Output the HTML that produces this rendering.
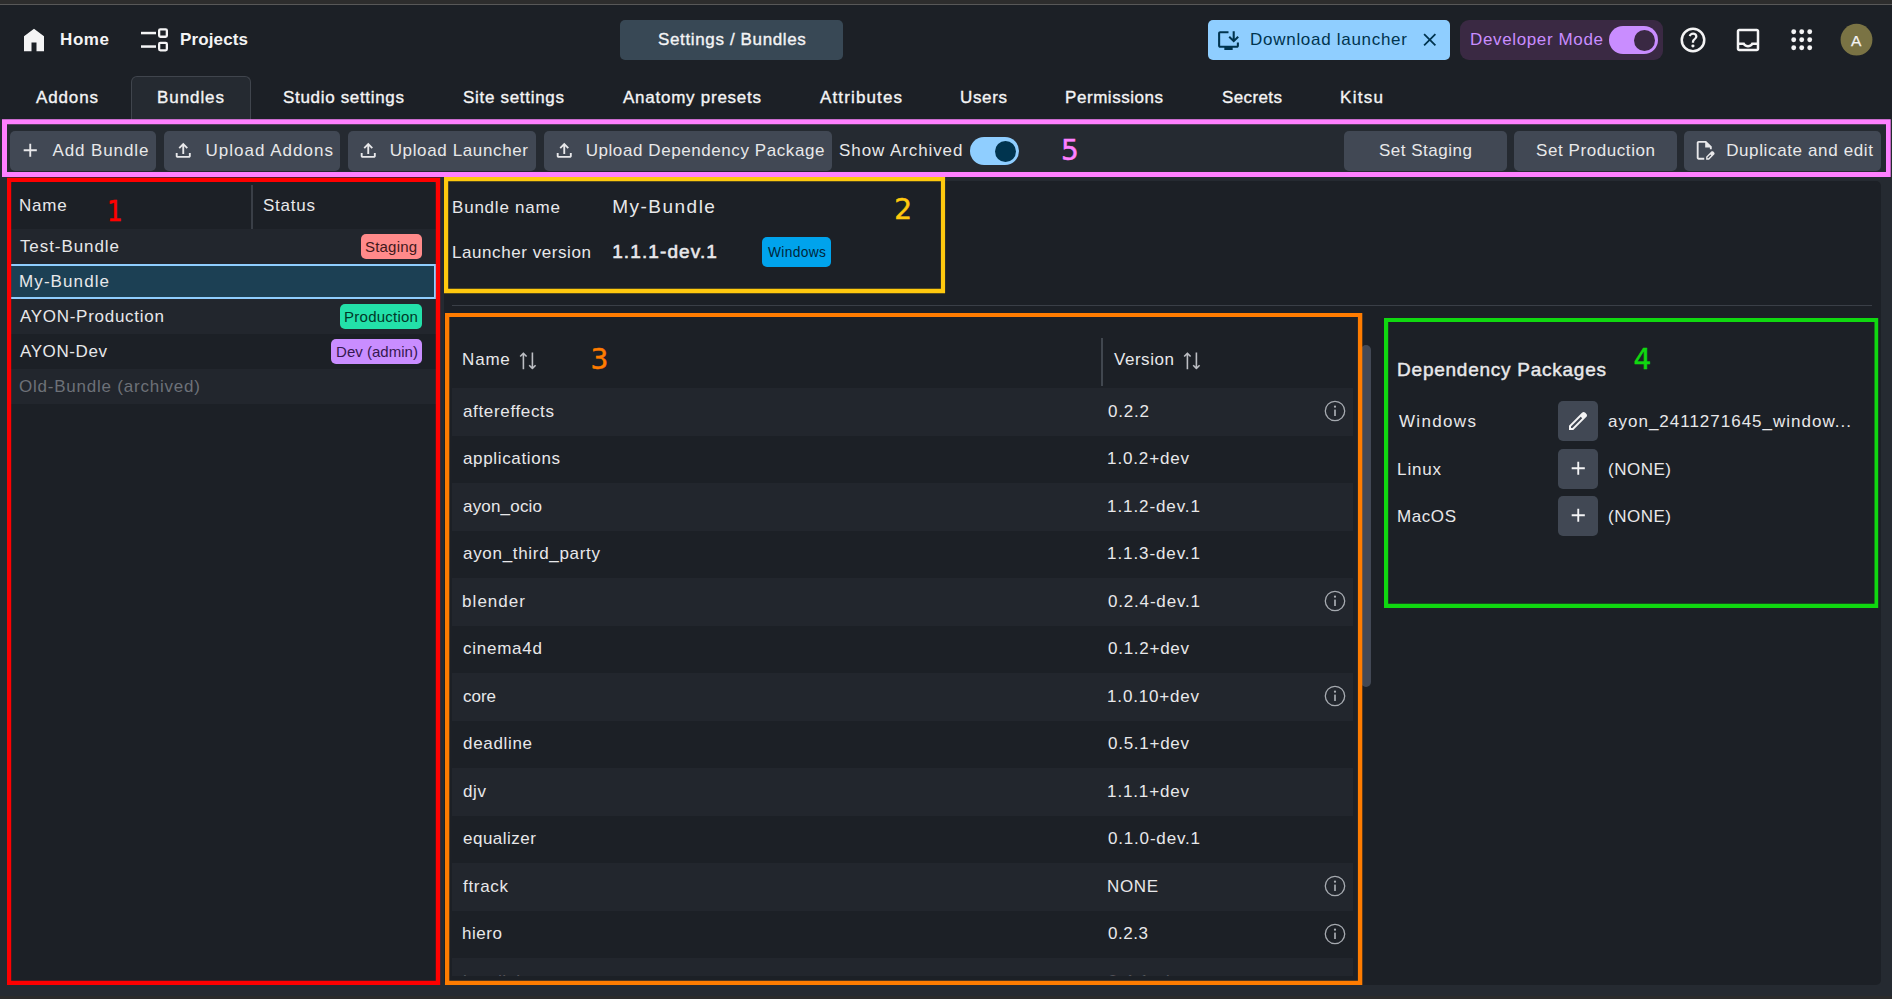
<!DOCTYPE html>
<html lang="en"><head><meta charset="utf-8"><title>AYON - Settings / Bundles</title>
<style>
html,body{margin:0;padding:0;}
body{width:1892px;height:999px;overflow:hidden;background:#1c2026;position:relative;font-family:"Liberation Sans", sans-serif;}
.b{position:absolute;box-sizing:content-box;}
.t{position:absolute;white-space:nowrap;line-height:1;}
svg{position:absolute;overflow:visible;}
</style></head><body>
<div class="b" style="left:0px;top:0px;width:1892px;height:4px;background:#2d2d2d;"></div>
<div class="b" style="left:0px;top:4px;width:1892px;height:1px;background:#585858;"></div>
<div class="b" style="left:0px;top:119px;width:1892px;height:877px;background:#252a31;"></div>
<div class="b" style="left:0px;top:996px;width:1892px;height:3px;background:#2b2b2b;"></div>
<svg style="left:18.7px;top:25px" width="30" height="30" viewBox="0 -960 960 960"><path fill="#f4f4f5" d="M160-120v-480l320-240 320 240v480H560v-280H400v280H160Z"/></svg>
<svg style="left:0;top:0" width="200" height="60"><g fill="#f4f4f5"><rect x="141" y="31.8" width="15" height="2.5"/><rect x="141" y="45.300" width="15" height="2.500"/></g><g fill="none" stroke="#f4f4f5" stroke-width="2.300"><rect x="159.150" y="29.350" width="7.700" height="7.400" rx="1.200"/><rect x="159.150" y="42.900" width="7.700" height="7.400" rx="1.200"/></g></svg>
<div class="b" style="left:620px;top:20px;width:223px;height:40px;background:#384855;border-radius:5px;"></div>
<div class="b" style="left:1208px;top:20px;width:242px;height:40px;background:#8fceff;border-radius:5px;"></div>
<svg style="left:1215.5px;top:27.5px" width="25" height="25" viewBox="0 -960 960 960"><path fill="#00344f" d="M320-120v-80H160q-33 0-56.5-23.5T80-280v-480q0-33 23.5-56.5T160-840h320v80H160v480h640v-120h80v120q0 33-23.5 56.5T800-200H640v80H320Zm360-280L480-600l56-56 104 104v-288h80v288l104-104 56 56-200 200Z"/></svg>
<svg style="left:1419.2px;top:29.2px" width="21.5" height="21.5" viewBox="0 -960 960 960"><path fill="#00344f" d="M256-200l-56-56 224-224-224-224 56-56 224 224 224-224 56 56-224 224 224 224-56 56-224-224-224 224Z"/></svg>
<div class="b" style="left:1460px;top:20px;width:203px;height:40px;background:#3a2943;border-radius:9px;"></div>
<div class="b" style="left:1609px;top:26px;width:49px;height:28px;background:#c98dff;border-radius:14px;"></div>
<div class="b" style="left:1634px;top:29.5px;width:21px;height:21px;background:#3a2943;border-radius:50%;"></div>
<svg style="left:1678px;top:24.7px" width="30" height="30" viewBox="0 -960 960 960"><path fill="#f4f4f5" d="M478-240q21 0 35.5-14.5T528-290q0-21-14.5-35.5T478-340q-21 0-35.5 14.5T428-290q0 21 14.5 35.5T478-240Zm-36-154h74q0-33 7.5-52t42.5-52q26-26 41-49.5t15-56.5q0-56-41-86t-97-30q-57 0-92.5 30T342-618l66 26q5-18 22.5-39t53.5-21q32 0 48 17t16 38.5q0 20-12 37.5T506-526q-44 39-54 59t-10 73Zm38 314q-83 0-156-31.5T197-197q-54-54-85.5-127T80-480q0-83 31.5-156T197-763q54-54 127-85.5T480-880q83 0 156 31.5T763-763q54 54 85.5 127T880-480q0 83-31.5 156T763-197q-54 54-127 85.5T480-80Zm0-80q134 0 227-93t93-227q0-134-93-227t-227-93q-134 0-227 93t-93 227q0 134 93 227t227 93Z"/></svg>
<svg style="left:1732.5px;top:25px" width="30" height="30" viewBox="0 -960 960 960"><path fill="#f4f4f5" d="M200-120q-33 0-56.5-23.5T120-200v-560q0-33 23.5-56.5T200-840h560q33 0 56.5 23.5T840-760v560q0 33-23.5 56.5T760-120H200Zm0-80h560v-120H640q-30 38-71.5 59T480-240q-47 0-88.5-21T320-320H200v120Zm280-120q38 0 69-22t43-58h168v-360H200v360h168q12 36 43 58t69 22Z"/></svg>
<svg style="left:0;top:0" width="1892" height="70"><g fill="#f4f4f5"><circle cx="1793.7" cy="31.7" r="2.450"/><circle cx="1793.7" cy="39.7" r="2.450"/><circle cx="1793.7" cy="47.7" r="2.450"/><circle cx="1801.7" cy="31.7" r="2.450"/><circle cx="1801.7" cy="39.7" r="2.450"/><circle cx="1801.7" cy="47.7" r="2.450"/><circle cx="1809.7" cy="31.7" r="2.450"/><circle cx="1809.7" cy="39.7" r="2.450"/><circle cx="1809.7" cy="47.7" r="2.450"/></g><circle cx="1856.500" cy="39.700" r="15.900" fill="#7a7344"/></svg>
<div class="b" style="left:131px;top:76px;width:118px;height:44px;background:#252a31;border:1px solid #40454d;border-bottom:none;border-radius:6px 6px 0 0;"></div>
<div class="b" style="left:10px;top:131px;width:146px;height:40px;background:#414854;border-radius:5px;"></div>
<svg style="left:18.75px;top:139.15px" width="22.5" height="22.5" viewBox="0 -960 960 960"><path fill="#e8e8ea" d="M440-440H200v-80h240v-240h80v240h240v80H520v240h-80v-240Z"/></svg>
<div class="b" style="left:163.5px;top:131px;width:176.7px;height:40px;background:#414854;border-radius:5px;"></div>
<svg style="left:172.25px;top:139.15px" width="22.5" height="22.5" viewBox="0 -960 960 960"><path fill="#e8e8ea" d="M440-320v-326L336-542l-56-58 200-200 200 200-56 58-104-104v326h-80ZM240-160q-33 0-56.5-23.5T160-240v-120h80v120h480v-120h80v120q0 33-23.5 56.5T720-160H240Z"/></svg>
<div class="b" style="left:347.8px;top:131px;width:188px;height:40px;background:#414854;border-radius:5px;"></div>
<svg style="left:356.55px;top:139.15px" width="22.5" height="22.5" viewBox="0 -960 960 960"><path fill="#e8e8ea" d="M440-320v-326L336-542l-56-58 200-200 200 200-56 58-104-104v326h-80ZM240-160q-33 0-56.5-23.5T160-240v-120h80v120h480v-120h80v120q0 33-23.5 56.5T720-160H240Z"/></svg>
<div class="b" style="left:543.8px;top:131px;width:288.2px;height:40px;background:#414854;border-radius:5px;"></div>
<svg style="left:552.55px;top:139.15px" width="22.5" height="22.5" viewBox="0 -960 960 960"><path fill="#e8e8ea" d="M440-320v-326L336-542l-56-58 200-200 200 200-56 58-104-104v326h-80ZM240-160q-33 0-56.5-23.5T160-240v-120h80v120h480v-120h80v120q0 33-23.5 56.5T720-160H240Z"/></svg>
<div class="b" style="left:970px;top:137px;width:49px;height:28px;background:#8fceff;border-radius:14px;"></div>
<div class="b" style="left:994.5px;top:140.5px;width:21px;height:21px;background:#00344f;border-radius:50%;"></div>
<div class="b" style="left:1344px;top:131px;width:162.8px;height:40px;background:#414854;border-radius:5px;"></div>
<div class="b" style="left:1514px;top:131px;width:162.7px;height:40px;background:#414854;border-radius:5px;"></div>
<div class="b" style="left:1684px;top:131px;width:197px;height:40px;background:#414854;border-radius:5px;"></div>
<svg style="left:1692.75px;top:139.15px" width="22.5" height="22.5" viewBox="0 -960 960 960"><path fill="#e8e8ea" d="M560-80v-123l221-220q9-9 20-13t22-4q12 0 23 4.5t20 13.5l37 37q8 9 12.5 20t4.5 22q0 11-4 22.5T903-300L683-80H560ZM620-140h38l121-122-18-19-19-18-122 121v38ZM240-80q-33 0-56.5-23.5T160-160v-640q0-33 23.5-56.5T240-880h320l240 240v120h-80v-80H520v-200H240v640h240v80H240Z"/></svg>
<div class="b" style="left:10px;top:181px;width:426px;height:804px;background:#1c2026;border-radius:5px;"></div>
<div class="b" style="left:251px;top:185px;width:2px;height:44px;background:#3a3f47;"></div>
<div class="b" style="left:11px;top:229px;width:425px;height:35px;background:#22262d;"></div>
<div class="b" style="left:9px;top:264px;width:423px;height:31px;background:#1c4054;border:2px solid #8fceff;"></div>
<div class="b" style="left:11px;top:299px;width:425px;height:35px;background:#22262d;"></div>
<div class="b" style="left:11px;top:369px;width:425px;height:35px;background:#22262d;"></div>
<div class="b" style="left:361px;top:234px;width:61.2px;height:25px;background:#ff8a8a;border-radius:5px;"></div>
<div class="b" style="left:340px;top:304px;width:82.2px;height:25px;background:#23e0a9;border-radius:5px;"></div>
<div class="b" style="left:331px;top:339px;width:91.2px;height:25px;background:#c98dff;border-radius:5px;"></div>
<div class="b" style="left:444px;top:181px;width:1437px;height:804px;background:#1c2026;border-radius:5px;"></div>
<div class="b" style="left:762px;top:237px;width:69px;height:30px;background:#00a3ec;border-radius:5px;"></div>
<div class="b" style="left:452px;top:305px;width:1420px;height:1px;background:#3a3f47;"></div>
<div class="b" style="left:1101px;top:338px;width:2px;height:48px;background:#41474f;"></div>
<svg style="left:519px;top:351.8px" width="18" height="18" viewBox="0 0 18 18" fill="none" stroke="#bcbec3" stroke-width="1.6" stroke-linejoin="round"><path d="M4.4 17.2V1.2M1.2 4.500L4.4 1.2l3.200 3.300M13.400 0.400V16.500M10.200 13.200l3.200 3.300 3.200-3.300"/></svg>
<svg style="left:1182.8px;top:351.8px" width="18" height="18" viewBox="0 0 18 18" fill="none" stroke="#bcbec3" stroke-width="1.6" stroke-linejoin="round"><path d="M4.4 17.2V1.2M1.2 4.500L4.4 1.2l3.200 3.300M13.400 0.400V16.500M10.200 13.200l3.200 3.300 3.200-3.300"/></svg>
<div class="b" style="left:452px;top:388px;width:901px;height:47.5px;background:#22262d;"></div>
<svg style="left:1323px;top:399px" width="24" height="24" viewBox="0 0 24 24"><circle cx="12" cy="12" r="9.700" fill="none" stroke="#a6aab0" stroke-width="1.300"/><rect x="11.200" y="10.600" width="1.600" height="6.400" fill="#aeb2b8"/><circle cx="12" cy="7.700" r="1.100" fill="#aeb2b8"/></svg>
<div class="b" style="left:452px;top:483px;width:901px;height:47.5px;background:#22262d;"></div>
<div class="b" style="left:452px;top:578px;width:901px;height:47.5px;background:#22262d;"></div>
<svg style="left:1323px;top:589px" width="24" height="24" viewBox="0 0 24 24"><circle cx="12" cy="12" r="9.700" fill="none" stroke="#a6aab0" stroke-width="1.300"/><rect x="11.200" y="10.600" width="1.600" height="6.400" fill="#aeb2b8"/><circle cx="12" cy="7.700" r="1.100" fill="#aeb2b8"/></svg>
<div class="b" style="left:452px;top:673px;width:901px;height:47.5px;background:#22262d;"></div>
<svg style="left:1323px;top:684px" width="24" height="24" viewBox="0 0 24 24"><circle cx="12" cy="12" r="9.700" fill="none" stroke="#a6aab0" stroke-width="1.300"/><rect x="11.200" y="10.600" width="1.600" height="6.400" fill="#aeb2b8"/><circle cx="12" cy="7.700" r="1.100" fill="#aeb2b8"/></svg>
<div class="b" style="left:452px;top:768px;width:901px;height:47.5px;background:#22262d;"></div>
<div class="b" style="left:452px;top:863px;width:901px;height:47.5px;background:#22262d;"></div>
<svg style="left:1323px;top:874px" width="24" height="24" viewBox="0 0 24 24"><circle cx="12" cy="12" r="9.700" fill="none" stroke="#a6aab0" stroke-width="1.300"/><rect x="11.200" y="10.600" width="1.600" height="6.400" fill="#aeb2b8"/><circle cx="12" cy="7.700" r="1.100" fill="#aeb2b8"/></svg>
<svg style="left:1323px;top:921.5px" width="24" height="24" viewBox="0 0 24 24"><circle cx="12" cy="12" r="9.700" fill="none" stroke="#a6aab0" stroke-width="1.300"/><rect x="11.200" y="10.600" width="1.600" height="6.400" fill="#aeb2b8"/><circle cx="12" cy="7.700" r="1.100" fill="#aeb2b8"/></svg>
<div class="b" style="left:452px;top:958px;width:901px;height:18px;background:#22262d;"></div>
<div class="b" style="left:1361px;top:344.5px;width:10px;height:342px;background:#424855;border-radius:5px;"></div>
<div class="b" style="left:1558px;top:401.3px;width:40px;height:40px;background:#414854;border-radius:5px;"></div>
<svg style="left:1566px;top:409.3px" width="24" height="24" viewBox="0 -960 960 960"><path fill="#f4f4f5" d="M200-200h57l391-391-57-57-391 391v57Zm-80 80v-170l528-527q12-11 26.5-17t30.5-6q16 0 31 6t26 18l55 56q12 11 17 26t5.5 30q0 16-5.500 30.500T817-647L290-120H120Z"/></svg>
<div class="b" style="left:1558px;top:448.8px;width:40px;height:40px;background:#414854;border-radius:5px;"></div>
<svg style="left:1566.75px;top:456.95px" width="22.5" height="22.5" viewBox="0 -960 960 960"><path fill="#f4f4f5" d="M440-440H200v-80h240v-240h80v240h240v80H520v240h-80v-240Z"/></svg>
<div class="b" style="left:1558px;top:496.3px;width:40px;height:40px;background:#414854;border-radius:5px;"></div>
<svg style="left:1566.75px;top:504.45px" width="22.5" height="22.5" viewBox="0 -960 960 960"><path fill="#f4f4f5" d="M440-440H200v-80h240v-240h80v240h240v80H520v240h-80v-240Z"/></svg>
<svg style="left:0;top:0" width="1892" height="999"><path fill="#ff80ff" fill-rule="evenodd" d="M2 119.3H1890.7V177H2ZM7 124.2H1886V172H7Z"/></svg>
<svg style="left:0;top:0" width="1892" height="999"><path fill="#ff0000" fill-rule="evenodd" d="M7 177.8H440.2V985.1H7ZM11.2 182H435.8V980.8H11.2Z"/></svg>
<svg style="left:0;top:0" width="1892" height="999"><path fill="#ffc90e" fill-rule="evenodd" d="M444 177H945.1V293.2H444ZM448.2 181.3H940.9V288.8H448.2Z"/></svg>
<svg style="left:0;top:0" width="1892" height="999"><path fill="#ff7c00" fill-rule="evenodd" d="M445 313H1362.3V985.1H445ZM449.3 317.1H1357.9V980.7H449.3Z"/></svg>
<svg style="left:0;top:0" width="1892" height="999"><path fill="#10d810" fill-rule="evenodd" d="M1384 318H1878.2V607.9H1384ZM1388.2 322H1874.5V603.8H1388.2Z"/></svg>
<span class="t" id="t0" style="left:60.06px;top:30.61px;font-size:17px;color:#f4f4f5;font-weight:700;letter-spacing:0.569px;">Home</span>
<span class="t" id="t1" style="left:180.10px;top:30.61px;font-size:17px;color:#f4f4f5;font-weight:700;letter-spacing:0.108px;">Projects</span>
<span class="t" id="t2" style="left:658.03px;top:30.61px;font-size:17px;color:#f4f4f5;letter-spacing:0.637px;-webkit-text-stroke:0.35px #f4f4f5;">Settings / Bundles</span>
<span class="t" id="t3" style="left:1250.10px;top:31.41px;font-size:17px;color:#00344f;letter-spacing:0.707px;">Download launcher</span>
<span class="t" id="t4" style="left:1470.06px;top:31.41px;font-size:17px;color:#c98dff;letter-spacing:0.630px;">Developer Mode</span>
<span class="t" id="t5" style="left:1850.98px;top:32.98px;font-size:15.5px;color:#f4f4f5;letter-spacing:0.756px;-webkit-text-stroke:0.25px #f4f4f5;">A</span>
<span class="t" id="t6" style="left:36.00px;top:88.61px;font-size:17px;color:#f4f4f5;letter-spacing:0.866px;-webkit-text-stroke:0.35px #f4f4f5;">Addons</span>
<span class="t" id="t7" style="left:157.10px;top:88.61px;font-size:17px;color:#f4f4f5;letter-spacing:0.910px;-webkit-text-stroke:0.35px #f4f4f5;">Bundles</span>
<span class="t" id="t8" style="left:283.00px;top:88.61px;font-size:17px;color:#f4f4f5;letter-spacing:0.677px;-webkit-text-stroke:0.35px #f4f4f5;">Studio settings</span>
<span class="t" id="t9" style="left:463.00px;top:88.61px;font-size:17px;color:#f4f4f5;letter-spacing:0.699px;-webkit-text-stroke:0.35px #f4f4f5;">Site settings</span>
<span class="t" id="t10" style="left:623.00px;top:88.61px;font-size:17px;color:#f4f4f5;letter-spacing:0.746px;-webkit-text-stroke:0.35px #f4f4f5;">Anatomy presets</span>
<span class="t" id="t11" style="left:820.00px;top:88.61px;font-size:17px;color:#f4f4f5;letter-spacing:1.132px;-webkit-text-stroke:0.35px #f4f4f5;">Attributes</span>
<span class="t" id="t12" style="left:960.10px;top:88.61px;font-size:17px;color:#f4f4f5;letter-spacing:0.623px;-webkit-text-stroke:0.35px #f4f4f5;">Users</span>
<span class="t" id="t13" style="left:1065.10px;top:88.61px;font-size:17px;color:#f4f4f5;letter-spacing:0.531px;-webkit-text-stroke:0.35px #f4f4f5;">Permissions</span>
<span class="t" id="t14" style="left:1222.00px;top:88.61px;font-size:17px;color:#f4f4f5;letter-spacing:0.393px;-webkit-text-stroke:0.35px #f4f4f5;">Secrets</span>
<span class="t" id="t15" style="left:1340.10px;top:88.61px;font-size:17px;color:#f4f4f5;letter-spacing:1.251px;-webkit-text-stroke:0.35px #f4f4f5;">Kitsu</span>
<span class="t" id="t16" style="left:52.43px;top:142.41px;font-size:17px;color:#e8e8ea;letter-spacing:0.905px;">Add Bundle</span>
<span class="t" id="t17" style="left:205.57px;top:142.41px;font-size:17px;color:#e8e8ea;letter-spacing:1.006px;">Upload Addons</span>
<span class="t" id="t18" style="left:389.63px;top:142.41px;font-size:17px;color:#e8e8ea;letter-spacing:0.635px;">Upload Launcher</span>
<span class="t" id="t19" style="left:585.63px;top:142.41px;font-size:17px;color:#e8e8ea;letter-spacing:0.579px;">Upload Dependency Package</span>
<span class="t" id="t20" style="left:839.05px;top:142.41px;font-size:17px;color:#e8e8ea;letter-spacing:0.912px;">Show Archived</span>
<span class="t" id="t21" style="left:1379.02px;top:142.41px;font-size:17px;color:#e8e8ea;letter-spacing:0.505px;">Set Staging</span>
<span class="t" id="t22" style="left:1536.09px;top:142.41px;font-size:17px;color:#e8e8ea;letter-spacing:0.566px;">Set Production</span>
<span class="t" id="t23" style="left:1726.14px;top:142.41px;font-size:17px;color:#e8e8ea;letter-spacing:0.631px;">Duplicate and edit</span>
<span class="t" id="t24" style="left:19.05px;top:196.81px;font-size:17px;color:#e8e8ea;letter-spacing:0.784px;">Name</span>
<span class="t" id="t25" style="left:263.02px;top:196.81px;font-size:17px;color:#e8e8ea;letter-spacing:0.761px;">Status</span>
<span class="t" id="t26" style="left:19.95px;top:237.91px;font-size:17px;color:#e8e8ea;letter-spacing:0.924px;">Test-Bundle</span>
<span class="t" id="t27" style="left:19.05px;top:272.91px;font-size:17px;color:#e8e8ea;letter-spacing:1.085px;">My-Bundle</span>
<span class="t" id="t28" style="left:19.95px;top:307.91px;font-size:17px;color:#e8e8ea;letter-spacing:0.721px;">AYON-Production</span>
<span class="t" id="t29" style="left:19.95px;top:342.91px;font-size:17px;color:#e8e8ea;letter-spacing:0.613px;">AYON-Dev</span>
<span class="t" id="t30" style="left:19.05px;top:377.91px;font-size:17px;color:#6d7178;letter-spacing:0.772px;">Old-Bundle (archived)</span>
<span class="t" id="t31" style="left:365.08px;top:238.70px;font-size:15px;color:#40181a;letter-spacing:0.174px;">Staging</span>
<span class="t" id="t32" style="left:344.10px;top:308.70px;font-size:15px;color:#003828;letter-spacing:0.231px;">Production</span>
<span class="t" id="t33" style="left:336.05px;top:343.70px;font-size:15px;color:#35184f;letter-spacing:0.016px;">Dev (admin)</span>
<span class="t" id="t34" style="left:452.06px;top:199.31px;font-size:17px;color:#e8e8ea;letter-spacing:0.771px;">Bundle name</span>
<span class="t" id="t35" style="left:612.14px;top:196.62px;font-size:19px;color:#e8e8ea;letter-spacing:1.498px;">My-Bundle</span>
<span class="t" id="t36" style="left:452.06px;top:243.61px;font-size:17px;color:#e8e8ea;letter-spacing:0.561px;">Launcher version</span>
<span class="t" id="t37" style="left:612.14px;top:241.92px;font-size:19px;color:#e8e8ea;letter-spacing:1.113px;-webkit-text-stroke:0.6px #e8e8ea;">1.1.1-dev.1</span>
<span class="t" id="t38" style="left:767.98px;top:246.31px;font-size:13.75px;color:#00263a;letter-spacing:0.356px;">Windows</span>
<span class="t" id="t39" style="left:462.11px;top:350.51px;font-size:17px;color:#e8e8ea;letter-spacing:0.784px;">Name</span>
<span class="t" id="t40" style="left:1113.94px;top:350.51px;font-size:17px;color:#e8e8ea;letter-spacing:0.553px;">Version</span>
<span class="t" id="t41" style="left:463.00px;top:403.21px;font-size:17px;color:#e8e8ea;letter-spacing:0.655px;">aftereffects</span>
<span class="t" id="t42" style="left:1108.00px;top:403.21px;font-size:17px;color:#e8e8ea;letter-spacing:0.775px;">0.2.2</span>
<span class="t" id="t43" style="left:463.00px;top:449.71px;font-size:17px;color:#e8e8ea;letter-spacing:0.656px;">applications</span>
<span class="t" id="t44" style="left:1107.10px;top:449.71px;font-size:17px;color:#e8e8ea;letter-spacing:0.849px;">1.0.2+dev</span>
<span class="t" id="t45" style="left:463.00px;top:498.21px;font-size:17px;color:#e8e8ea;letter-spacing:0.186px;">ayon_ocio</span>
<span class="t" id="t46" style="left:1107.10px;top:498.21px;font-size:17px;color:#e8e8ea;letter-spacing:0.905px;">1.1.2-dev.1</span>
<span class="t" id="t47" style="left:463.00px;top:544.71px;font-size:17px;color:#e8e8ea;letter-spacing:0.691px;">ayon_third_party</span>
<span class="t" id="t48" style="left:1107.10px;top:544.71px;font-size:17px;color:#e8e8ea;letter-spacing:0.905px;">1.1.3-dev.1</span>
<span class="t" id="t49" style="left:462.10px;top:593.21px;font-size:17px;color:#e8e8ea;letter-spacing:1.030px;">blender</span>
<span class="t" id="t50" style="left:1108.00px;top:593.21px;font-size:17px;color:#e8e8ea;letter-spacing:0.815px;">0.2.4-dev.1</span>
<span class="t" id="t51" style="left:463.00px;top:639.71px;font-size:17px;color:#e8e8ea;letter-spacing:0.741px;">cinema4d</span>
<span class="t" id="t52" style="left:1108.00px;top:639.71px;font-size:17px;color:#e8e8ea;letter-spacing:0.736px;">0.1.2+dev</span>
<span class="t" id="t53" style="left:463.00px;top:688.21px;font-size:17px;color:#e8e8ea;letter-spacing:-0.026px;">core</span>
<span class="t" id="t54" style="left:1107.10px;top:688.21px;font-size:17px;color:#e8e8ea;letter-spacing:0.816px;">1.0.10+dev</span>
<span class="t" id="t55" style="left:463.00px;top:734.71px;font-size:17px;color:#e8e8ea;letter-spacing:0.674px;">deadline</span>
<span class="t" id="t56" style="left:1108.00px;top:734.71px;font-size:17px;color:#e8e8ea;letter-spacing:0.736px;">0.5.1+dev</span>
<span class="t" id="t57" style="left:463.00px;top:783.21px;font-size:17px;color:#e8e8ea;letter-spacing:0.633px;">djv</span>
<span class="t" id="t58" style="left:1107.10px;top:783.21px;font-size:17px;color:#e8e8ea;letter-spacing:0.849px;">1.1.1+dev</span>
<span class="t" id="t59" style="left:463.00px;top:829.71px;font-size:17px;color:#e8e8ea;letter-spacing:0.500px;">equalizer</span>
<span class="t" id="t60" style="left:1108.00px;top:829.71px;font-size:17px;color:#e8e8ea;letter-spacing:0.815px;">0.1.0-dev.1</span>
<span class="t" id="t61" style="left:463.00px;top:878.21px;font-size:17px;color:#e8e8ea;letter-spacing:0.688px;">ftrack</span>
<span class="t" id="t62" style="left:1107.10px;top:878.21px;font-size:17px;color:#e8e8ea;letter-spacing:0.592px;">NONE</span>
<span class="t" id="t63" style="left:462.10px;top:924.71px;font-size:17px;color:#e8e8ea;letter-spacing:0.522px;">hiero</span>
<span class="t" id="t64" style="left:1108.00px;top:924.71px;font-size:17px;color:#e8e8ea;letter-spacing:0.550px;">0.2.3</span>
<span class="t" id="t65" style="left:463.00px;top:973.21px;font-size:17px;color:#e8e8ea;letter-spacing:0.362px;clip-path:inset(0 0 15px 0);">houdini</span>
<span class="t" id="t66" style="left:1108.00px;top:973.21px;font-size:17px;color:#e8e8ea;letter-spacing:0.755px;clip-path:inset(0 0 15px 0);">0.4.1+dev</span>
<span class="t" id="t67" style="left:1397.12px;top:359.92px;font-size:19px;color:#e8e8ea;letter-spacing:0.748px;-webkit-text-stroke:0.45px #e8e8ea;">Dependency Packages</span>
<span class="t" id="t68" style="left:1398.92px;top:412.91px;font-size:17px;color:#e8e8ea;letter-spacing:1.352px;">Windows</span>
<span class="t" id="t69" style="left:1608.05px;top:412.91px;font-size:17px;color:#e8e8ea;letter-spacing:0.994px;">ayon_2411271645_window...</span>
<span class="t" id="t70" style="left:1397.12px;top:461.41px;font-size:17px;color:#e8e8ea;letter-spacing:0.818px;">Linux</span>
<span class="t" id="t71" style="left:1608.05px;top:461.41px;font-size:17px;color:#e8e8ea;letter-spacing:0.479px;">(NONE)</span>
<span class="t" id="t72" style="left:1397.12px;top:507.91px;font-size:17px;color:#e8e8ea;letter-spacing:0.548px;">MacOS</span>
<span class="t" id="t73" style="left:1608.05px;top:507.91px;font-size:17px;color:#e8e8ea;letter-spacing:0.479px;">(NONE)</span>
<span class="t" id="t74" style="left:107.10px;top:197.90px;font-size:28px;color:#ff0000;letter-spacing:-1.789px;font-family:'DejaVu Sans',sans-serif;letter-spacing:0;-webkit-text-stroke:0.5px #ff0000;transform:scaleX(0.88);transform-origin:0 0;">1</span>
<span class="t" id="t75" style="left:894.20px;top:196.30px;font-size:28px;color:#ffc90e;letter-spacing:-1.728px;font-family:'DejaVu Sans',sans-serif;letter-spacing:0;-webkit-text-stroke:0.5px #ffc90e;">2</span>
<span class="t" id="t76" style="left:590.50px;top:346.30px;font-size:28px;color:#ff7c00;letter-spacing:-2.328px;font-family:'DejaVu Sans',sans-serif;letter-spacing:0;-webkit-text-stroke:0.5px #ff7c00;">3</span>
<span class="t" id="t77" style="left:1633.50px;top:346.00px;font-size:28px;color:#10d810;letter-spacing:-0.328px;font-family:'DejaVu Sans',sans-serif;letter-spacing:0;-webkit-text-stroke:0.5px #10d810;">4</span>
<span class="t" id="t78" style="left:1061.00px;top:137.30px;font-size:28px;color:#ff80ff;letter-spacing:-2.578px;font-family:'DejaVu Sans',sans-serif;letter-spacing:0;-webkit-text-stroke:0.5px #ff80ff;">5</span>
</body></html>
